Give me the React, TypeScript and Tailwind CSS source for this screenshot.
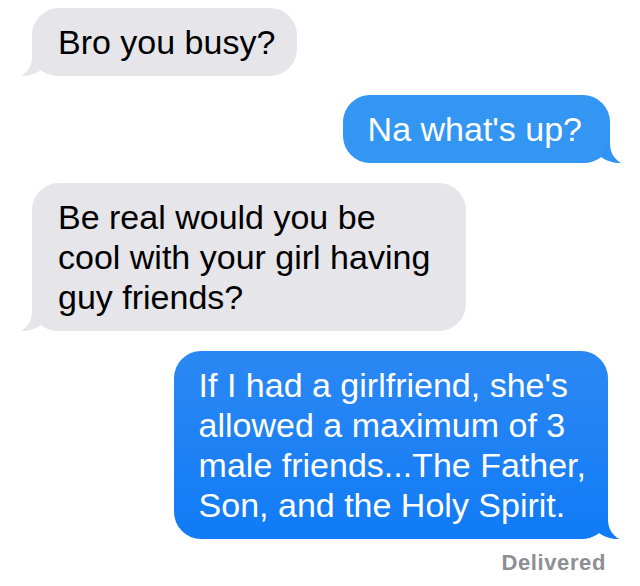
import React from "react";

function Tail({ side, color }: { side: "left" | "right"; color: string }) {
  const pos = side === "left" ? "left-[-11px]" : "right-[-11px] -scale-x-100";
  return (
    <svg
      className={`absolute bottom-0 ${pos}`}
      width="44"
      height="32"
      viewBox="0 0 44 32"
    >
      <path
        d="M11 0 L11 12 C11 23 6 28 0 32 C8 32 14 30 20 26 C26 31 32 32 44 32 L44 0 Z"
        fill={color}
      />
    </svg>
  );
}

function Received({
  children,
  pr,
}: {
  children: React.ReactNode;
  pr: string;
}) {
  return (
    <div className="flex justify-start pl-[32px]">
      <div className="relative">
        <Tail side="left" color="#e5e5ea" />
        <div
          className={`relative rounded-[27px] bg-[#e5e5ea] py-[14px] pl-[26px] text-[34px] leading-[40px] text-black ${pr}`}
        >
          {children}
        </div>
      </div>
    </div>
  );
}

function Sent({
  children,
  bg,
  tail,
  pr,
  mr,
}: {
  children: React.ReactNode;
  bg: string;
  tail: string;
  pr: string;
  mr: string;
}) {
  return (
    <div className={`flex justify-end ${mr}`}>
      <div className="relative">
        <Tail side="right" color={tail} />
        <div
          className={`relative rounded-[27px] py-[14px] pl-[25px] text-[34px] leading-[40px] text-white ${bg} ${pr}`}
        >
          {children}
        </div>
      </div>
    </div>
  );
}

export default function App() {
  return (
    <div
      className="w-[640px] h-[586px] overflow-hidden bg-white pt-[8px]"
      style={{ fontFamily: '"Liberation Sans", Arial, sans-serif' }}
    >
      <div className="flex flex-col">
        <Received pr="pr-[22px]">Bro you busy?</Received>
        <div className="h-[19px]" />
        <Sent bg="bg-[#3396f2]" tail="#2f93f2" pr="pr-[28px]" mr="pr-[30px]">
          Na what's up?
        </Sent>
        <div className="h-[20px]" />
        <Received pr="pr-[36px]">
          Be real would you be
          <br />
          cool with your girl having
          <br />
          guy friends?
        </Received>
        <div className="h-[20px]" />
        <Sent
          bg="bg-gradient-to-b from-[#2a88f3] to-[#0f7bf6]"
          tail="#0f7bf6"
          pr="pr-[22px]"
          mr="pr-[32px]"
        >
          If I had a girlfriend, she's
          <br />
          allowed a maximum of 3
          <br />
          male friends...The Father,
          <br />
          Son, and the Holy Spirit.
        </Sent>
        <div className="flex justify-end pr-[34px] pt-[11px]">
          <span className="text-[22px] font-bold tracking-[0.6px] leading-[26px] text-[#8e8e93]">
            Delivered
          </span>
        </div>
      </div>
    </div>
  );
}
